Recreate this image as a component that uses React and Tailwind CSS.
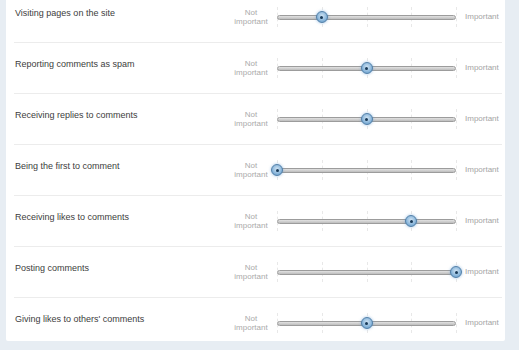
const settings = [
  { label: 'Visiting pages on the site', value: 1 },
  { label: 'Reporting comments as spam', value: 2 },
  { label: 'Receiving replies to comments', value: 2 },
  { label: 'Being the first to comment', value: 0 },
  { label: 'Receiving likes to comments', value: 3 },
  { label: 'Posting comments', value: 4 },
  { label: "Giving likes to others' comments", value: 2 },
];

function Slider({ value }) {
  return (
    <div className="relative w-[179px] h-[20px] shrink-0">
      {/* tick marks */}
      {[0, 1, 2, 3, 4].map((i) => (
        <div
          key={i}
          className="absolute top-0 h-[20px] border-l border-dashed border-[#e8e8e8]"
          style={{ left: `${i * 25}%` }}
        />
      ))}
      <div className="absolute left-0 right-0 top-[8px] h-[5px] rounded-full border border-[#9c9c9c] bg-gradient-to-b from-[#e2e2e2] to-[#bdbdbd]" />
      <div
        className="absolute top-[4px] w-[12px] h-[12px] -ml-[6px] rounded-full border border-[#4f7ea8] bg-[radial-gradient(circle_at_50%_40%,#cfe3f3,#7eaed6_70%,#5f92bf)] shadow-[0_0_3px_rgba(90,150,210,0.6)] flex items-center justify-center"
        style={{ left: `${value * 25}%` }}
      >
        <div className="w-[3px] h-[3px] rounded-full bg-[#183a58]" />
      </div>
    </div>
  );
}

export default function App() {
  return (
    <div className="w-[519px] h-[350px] overflow-hidden bg-[#e7edf3] font-['Liberation_Sans',Arial,sans-serif]">
      <div className="ml-[6px] -mt-[8px] w-[499px] bg-white rounded-b-[2px] pl-[8px] pr-[3px]">
        {settings.map((s, idx) => {
          const last = idx === settings.length - 1;
          return (
            <div
              key={s.label}
              className={last ? 'h-[43px]' : 'h-[51px] border-b border-[#ececec]'}
            >
              <div className="flex items-center h-[50px]">
                <div className="flex-1 pl-[1px] mb-[6px] text-[9px] text-[#3d3d3d]">{s.label}</div>
                <div className="w-[34px] mr-[9px] text-center text-[8px] leading-[9px] text-[#aaa]">
                  Not
                  <br />
                  important
                </div>
                <Slider value={s.value} />
                <div className="w-[46px] pl-[9px] text-[8px] text-[#a4a4a4]">Important</div>
              </div>
            </div>
          );
        })}
      </div>
    </div>
  );
}
